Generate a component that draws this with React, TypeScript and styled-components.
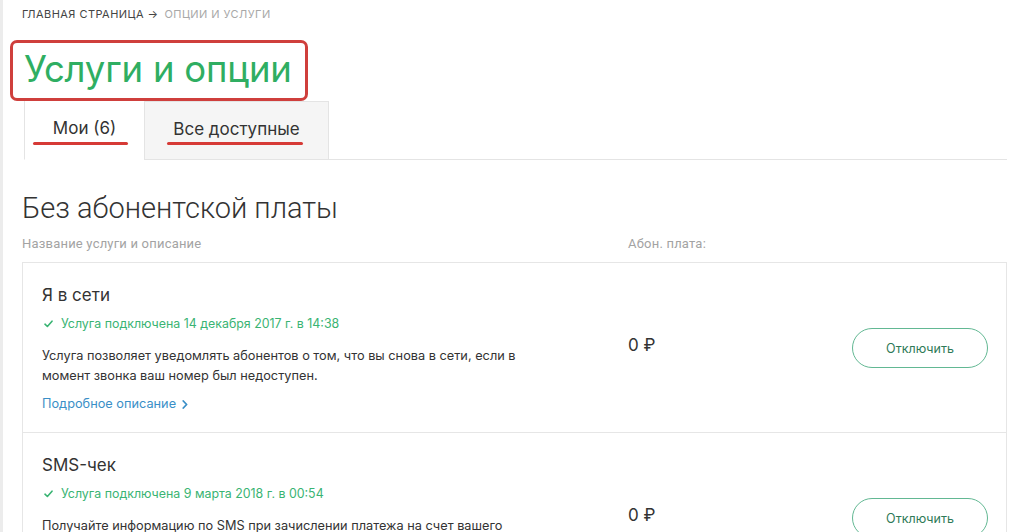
import React from "react";
import styled, { createGlobalStyle } from "styled-components";

const Global = createGlobalStyle`
  html, body { margin: 0; padding: 0; background: #fff; }
  body { font-family: Inter, "Open Sans", "Liberation Sans", sans-serif; color: #333; }
  * { box-sizing: border-box; }
`;

const Page = styled.div`
  width: 1024px;
  height: 532px;
  overflow: hidden;
  border-left: 3px solid #ececec;
  padding: 7px 17px 0 19px;
`;

const Breadcrumb = styled.nav`
  display: flex;
  gap: 6px;
  font-size: 11px;
  line-height: 14px;
  letter-spacing: 0.45px;
  text-transform: uppercase;
  color: #444;
`;

const Crumb = styled.span<{ $current?: boolean }>`
  color: ${(p) => (p.$current ? "#a8a8a8" : "#444")};
`;

const TitleFrame = styled.div`
  display: inline-block;
  margin: 19px 0 0 -12px;
  padding: 0 13px 0 11px;
  border: 3px solid #cf3f3c;
  border-radius: 7px;
  height: 61px;
`;

const Title = styled.h1`
  margin: 0;
  font-weight: 400;
  font-size: 36.5px;
  line-height: 53px;
  color: #2fae62;
  letter-spacing: -0.2px;
`;

const Tabs = styled.div`
  display: flex;
  margin-left: 2px;
  height: 59px;
`;

const TabRest = styled.div`
  flex: 1;
  border-bottom: 1px solid #e4e4e4;
`;

const Tab = styled.div<{ $active?: boolean; $w: number }>`
  width: ${(p) => p.$w}px;
  display: flex;
  align-items: center;
  justify-content: center;
  font-size: 17px;
  color: #333;
  background: ${(p) => (p.$active ? "#fff" : "#f5f5f5")};
  border-left: 1px solid #e4e4e4;
  border-top: ${(p) => (p.$active ? "none" : "1px solid #e4e4e4")};
  border-right: ${(p) => (p.$active ? "none" : "1px solid #e4e4e4")};
  border-bottom: ${(p) => (p.$active ? "1px solid #fff" : "1px solid #e4e4e4")};
  padding-bottom: 4px;
`;

const TabLabel = styled.span<{ $lineLeft: number; $lineRight: number; $lineTop: number }>`
  position: relative;
  &::after {
    content: "";
    position: absolute;
    left: ${(p) => p.$lineLeft}px;
    right: ${(p) => p.$lineRight}px;
    top: ${(p) => p.$lineTop}px;
    height: 3px;
    border-radius: 2px;
    background: #d63a36;
  }
`;

const SectionTitle = styled.h2`
  margin: 31px 0 0;
  font-family: Roboto, "Liberation Sans", sans-serif;
  font-weight: 300;
  font-size: 29px;
  line-height: 34px;
  color: #333;
`;

const ColumnHeads = styled.div`
  display: grid;
  grid-template-columns: 606px 1fr;
  margin: 11px 0 0;
  font-family: Roboto, "Liberation Sans", sans-serif;
  font-size: 13px;
  line-height: 16px;
  letter-spacing: 0.2px;
  color: #a3a3a3;
`;

const Card = styled.div`
  margin: 10px 0 0;
  border: 1px solid #e6e6e6;
  border-bottom: none;
`;

const Row = styled.div`
  display: grid;
  grid-template-columns: 586px 1fr auto;
  align-items: center;
  padding: 20px 18px 19px 19px;
  border-bottom: 1px solid #e6e6e6;
`;

const Info = styled.div`
  display: flex;
  flex-direction: column;
`;

const ServiceName = styled.div`
  font-size: 17px;
  line-height: 24px;
  color: #333;
`;

const Status = styled.div`
  display: flex;
  align-items: center;
  gap: 8px;
  margin: 8px 0 0 2px;
  font-size: 12.4px;
  line-height: 18px;
  color: #3ab473;
`;

const Description = styled.p`
  margin: 13px 0 0;
  max-width: 490px;
  font-size: 12.75px;
  line-height: 20px;
  color: #333;
`;

const More = styled.a`
  margin-top: 9px;
  display: flex;
  align-items: center;
  gap: 6px;
  font-size: 12.75px;
  line-height: 18px;
  color: #3a8fc7;
  text-decoration: none;
`;

const Price = styled.div`
  font-size: 17px;
  color: #333;
  margin-top: -6px;
`;

const OffButton = styled.button`
  width: 136px;
  height: 40px;
  border: 1px solid #62b893;
  border-radius: 20px;
  background: #fff;
  font-family: Inter, "Open Sans", sans-serif;
  font-size: 12.5px;
  color: #2e7a57;
  cursor: pointer;
`;

const Check = () => (
  <svg width="9" height="8" viewBox="0 0 9 8" fill="none">
    <path d="M1 4.2 L3.4 6.5 L8 1.2" stroke="#3ab473" strokeWidth="1.6" strokeLinecap="round" strokeLinejoin="round" />
  </svg>
);

const Chevron = () => (
  <svg width="6" height="9" viewBox="0 0 6 9" fill="none">
    <path d="M1.3 1 L4.6 4.5 L1.3 8" stroke="#3a8fc7" strokeWidth="1.8" strokeLinecap="round" strokeLinejoin="round" />
  </svg>
);

type Service = { name: string; since: string; text: string; price: string };

const services: Service[] = [
  {
    name: "Я в сети",
    since: "Услуга подключена 14 декабря 2017 г. в 14:38",
    text: "Услуга позволяет уведомлять абонентов о том, что вы снова в сети, если в момент звонка ваш номер был недоступен.",
    price: "0 ₽",
  },
  {
    name: "SMS-чек",
    since: "Услуга подключена 9 марта 2018 г. в 00:54",
    text: "Получайте информацию по SMS при зачислении платежа на счет вашего номера.",
    price: "0 ₽",
  },
];

export default function App() {
  return (
    <>
      <Global />
      <Page>
        <Breadcrumb>
          <Crumb>Главная страница →</Crumb>
          <Crumb $current>Опции и услуги</Crumb>
        </Breadcrumb>
        <TitleFrame>
          <Title>Услуги и опции</Title>
        </TitleFrame>
        <Tabs>
          <Tab $active $w={120}>
            <TabLabel $lineLeft={-20} $lineRight={-12} $lineTop={24}>Мои (6)</TabLabel>
          </Tab>
          <Tab $w={185}>
            <TabLabel $lineLeft={-6} $lineRight={-3} $lineTop={23}>Все доступные</TabLabel>
          </Tab>
          <TabRest />
        </Tabs>
        <SectionTitle>Без абонентской платы</SectionTitle>
        <ColumnHeads>
          <span>Название услуги и описание</span>
          <span>Абон. плата:</span>
        </ColumnHeads>
        <Card>
          {services.map((s) => (
            <Row key={s.name}>
              <Info>
                <ServiceName>{s.name}</ServiceName>
                <Status>
                  <Check />
                  {s.since}
                </Status>
                <Description>{s.text}</Description>
                <More href="#">
                  Подробное описание <Chevron />
                </More>
              </Info>
              <Price>{s.price}</Price>
              <OffButton>Отключить</OffButton>
            </Row>
          ))}
        </Card>
      </Page>
    </>
  );
}
